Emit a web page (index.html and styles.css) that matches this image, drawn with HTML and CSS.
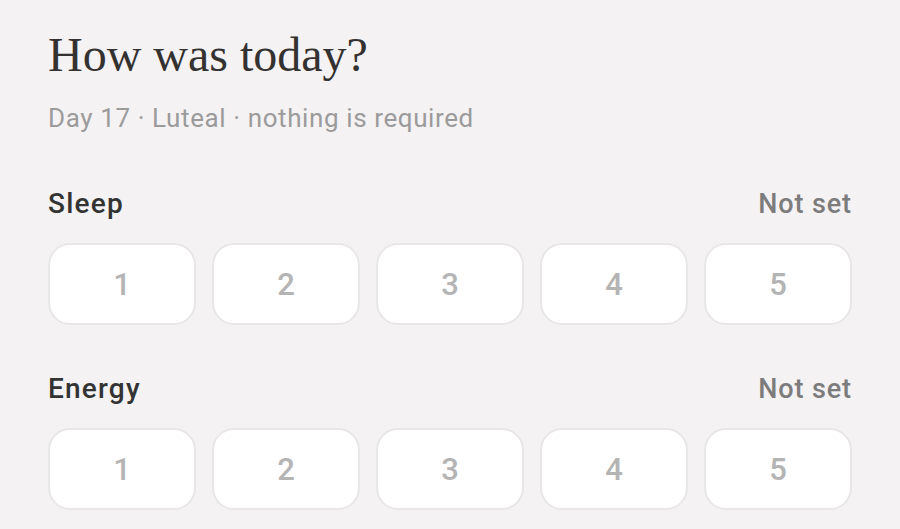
FILE: index.html
```html
<!DOCTYPE html>
<html lang="en">
<head>
  <meta charset="UTF-8" />
  <meta name="viewport" content="width=device-width, initial-scale=1.0" />
  <title>Check-in</title>
  <link rel="stylesheet" href="styles.css">
</head>
<body>
  <main class="checkin">
    <header class="checkin-head">
      <h1>How was today?</h1>
      <p class="subtitle">Day 17 · Luteal · nothing is required</p>
    </header>

    <section class="metric">
      <div class="metric-head">
        <h2>Sleep</h2>
        <span class="metric-value">Not set</span>
      </div>
      <div class="scale">
        <button class="scale-btn">1</button>
        <button class="scale-btn">2</button>
        <button class="scale-btn">3</button>
        <button class="scale-btn">4</button>
        <button class="scale-btn">5</button>
      </div>
    </section>

    <section class="metric">
      <div class="metric-head">
        <h2>Energy</h2>
        <span class="metric-value">Not set</span>
      </div>
      <div class="scale">
        <button class="scale-btn">1</button>
        <button class="scale-btn">2</button>
        <button class="scale-btn">3</button>
        <button class="scale-btn">4</button>
        <button class="scale-btn">5</button>
      </div>
    </section>
  </main>
</body>
</html>
```

FILE: styles.css
```css
/* Reset */
* {
  box-sizing: border-box;
  margin: 0;
  padding: 0;
}

html, body {
  background: #f4f2f3;
  font-family: Roboto, "Liberation Sans", sans-serif;
  color: #333;
}

.checkin {
  padding: 27px 48px 0;
}

.checkin-head h1 {
  font-family: "Liberation Serif", serif;
  font-weight: normal;
  font-size: 48px;
  line-height: 56px;
  color: #343131;
}

.subtitle {
  margin-top: 18px;
  font-size: 26px;
  letter-spacing: 0.6px;
  line-height: 34px;
  color: #9b9b9b;
}

.metric {
  margin-top: 51px;
}

.metric + .metric {
  margin-top: 46px;
}

.metric-head {
  display: flex;
  justify-content: space-between;
  align-items: baseline;
}

.metric-head h2 {
  font-size: 28px;
  font-weight: 500;
  letter-spacing: 1.2px;
  line-height: 36px;
  color: #333;
}

.metric-value {
  font-size: 27px;
  font-weight: 500;
  letter-spacing: 0.9px;
  color: #7c7c7c;
}

.scale {
  display: grid;
  grid-template-columns: repeat(5, 1fr);
  gap: 16px;
  margin-top: 21px;
}

.scale-btn {
  height: 82px;
  background: #fff;
  border: 2px solid #e8e6e7;
  border-radius: 22px;
  font-family: Roboto, "Liberation Sans", sans-serif;
  font-size: 31px;
  font-weight: 500;
  color: #b4b4b4;
  cursor: pointer;
}
```
